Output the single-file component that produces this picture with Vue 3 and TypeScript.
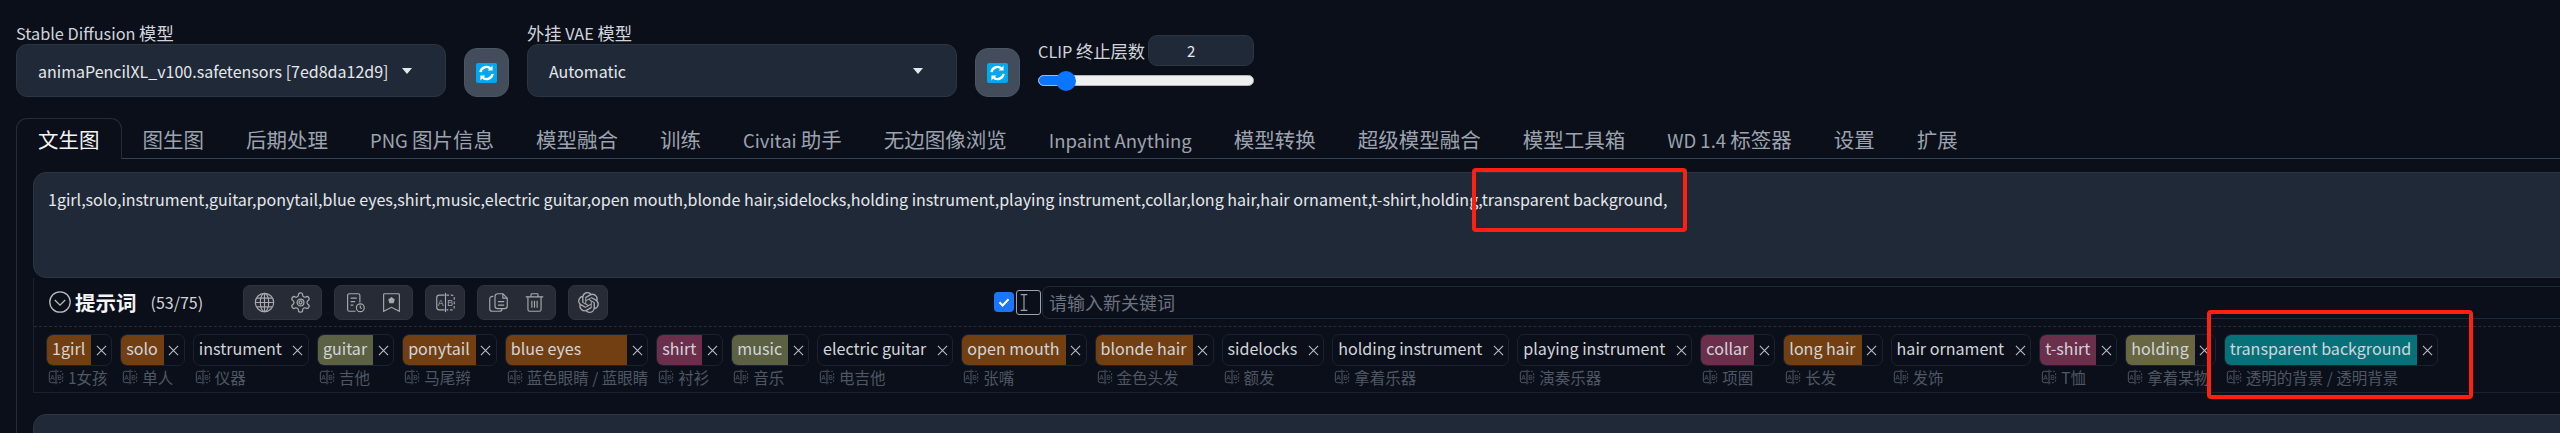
<script setup lang="ts">
interface Tag {
  name: string
  cn: string
  kind?: 'orange' | 'olive' | 'pink' | 'khaki' | 'teal'
}

const tabs = ['文生图', '图生图', '后期处理', 'PNG 图片信息', '模型融合', '训练', 'Civitai 助手', '无边图像浏览', 'Inpaint Anything', '模型转换', '超级模型融合', '模型工具箱', 'WD 1.4 标签器', '设置', '扩展']

const prompt = '1girl,solo,instrument,guitar,ponytail,blue eyes,shirt,music,electric guitar,open mouth,blonde hair,sidelocks,holding instrument,playing instrument,collar,long hair,hair ornament,t-shirt,holding,transparent background,'

const tags: Tag[] = [
  { name: '1girl', cn: '1女孩', kind: 'orange' },
  { name: 'solo', cn: '单人', kind: 'orange' },
  { name: 'instrument', cn: '仪器' },
  { name: 'guitar', cn: '吉他', kind: 'olive' },
  { name: 'ponytail', cn: '马尾辫', kind: 'orange' },
  { name: 'blue eyes', cn: '蓝色眼睛 / 蓝眼睛', kind: 'orange' },
  { name: 'shirt', cn: '衬衫', kind: 'pink' },
  { name: 'music', cn: '音乐', kind: 'olive' },
  { name: 'electric guitar', cn: '电吉他' },
  { name: 'open mouth', cn: '张嘴', kind: 'orange' },
  { name: 'blonde hair', cn: '金色头发', kind: 'orange' },
  { name: 'sidelocks', cn: '额发' },
  { name: 'holding instrument', cn: '拿着乐器' },
  { name: 'playing instrument', cn: '演奏乐器' },
  { name: 'collar', cn: '项圈', kind: 'pink' },
  { name: 'long hair', cn: '长发', kind: 'orange' },
  { name: 'hair ornament', cn: '发饰' },
  { name: 't-shirt', cn: 'T恤', kind: 'pink' },
  { name: 'holding', cn: '拿着某物', kind: 'khaki' },
  { name: 'transparent background', cn: '透明的背景 / 透明背景', kind: 'teal' }
]

// Latin and CJK runs are sized apart, the original's Latin face is narrower
function runs(text: string): { text: string; cjk: boolean }[] {
  return text
    .split(/([\u4e00-\u9fff]+)/)
    .filter((s) => s.length > 0)
    .map((s) => ({ text: s, cjk: /[\u4e00-\u9fff]/.test(s) }))
}
</script>

<template>
  <div class="page">
    <div class="top-row">
      <div class="field model-field">
        <label class="field-label"><span v-for="r in runs('Stable Diffusion 模型')" :key="r.text" :class="{ cjk: r.cjk }">{{ r.text }}</span></label>
        <div class="select">
          <span>animaPencilXL_v100.safetensors [7ed8da12d9]</span>
          <i class="caret"></i>
        </div>
      </div>
      <button class="refresh">
        <svg viewBox="0 0 21 20" width="21" height="20">
          <rect width="21" height="20" rx="2" fill="#00a8ef" />
          <path d="M4.5 9.2a6 6 0 0 1 10.3-3.4M16.5 10.8a6 6 0 0 1-10.3 3.4" fill="none" stroke="#fff" stroke-width="2.4" />
          <path d="M16.6 2.6v5h-5zM4.4 17.4v-5h5z" fill="#fff" />
        </svg>
      </button>
      <div class="field vae-field">
        <label class="field-label"><span v-for="r in runs('外挂 VAE 模型')" :key="r.text + r.cjk" :class="{ cjk: r.cjk }">{{ r.text }}</span></label>
        <div class="select">
          <span>Automatic</span>
          <i class="caret"></i>
        </div>
      </div>
      <button class="refresh">
        <svg viewBox="0 0 21 20" width="21" height="20">
          <rect width="21" height="20" rx="2" fill="#00a8ef" />
          <path d="M4.5 9.2a6 6 0 0 1 10.3-3.4M16.5 10.8a6 6 0 0 1-10.3 3.4" fill="none" stroke="#fff" stroke-width="2.4" />
          <path d="M16.6 2.6v5h-5zM4.4 17.4v-5h5z" fill="#fff" />
        </svg>
      </button>
      <div class="clip">
        <div class="clip-head">
          <span class="clip-label"><span v-for="r in runs('CLIP 终止层数')" :key="r.text" :class="{ cjk: r.cjk }">{{ r.text }}</span></span>
          <div class="clip-num">2</div>
        </div>
        <div class="slider">
          <div class="slider-fill"></div>
          <div class="slider-thumb"></div>
        </div>
      </div>
    </div>

    <div class="tabs">
      <div v-for="(t, i) in tabs" :key="t" :class="['tab', { active: i === 0 }]">
        <span v-for="r in runs(t)" :key="r.text" :class="{ latin: !r.cjk }">{{ r.text }}</span>
      </div>
      <div class="tabs-rest"></div>
    </div>

    <div class="panel">
      <div class="prompt-box">{{ prompt }}</div>

      <div class="editor">
        <div class="toolbar">
          <svg class="collapse" viewBox="0 0 22 22" width="22" height="22" fill="none" stroke="currentColor" stroke-width="1.3">
            <circle cx="11" cy="11" r="10.2" />
            <path d="M5.8 9l5.2 5.2L16.2 9" />
          </svg>
          <span class="editor-title">提示词</span>
          <span class="count">(53/75)</span>

          <div class="btn-group first">
            <svg viewBox="0 0 24 24" class="ico">
              <circle cx="12" cy="12" r="10.5" />
              <ellipse cx="12" cy="12" rx="4.8" ry="10.5" />
              <path d="M12 1.5v21M1.5 12h21M3 7h18M3 17h18" />
            </svg>
            <svg viewBox="1 1 22 22" class="ico">
              <path d="M12.22 2h-.44a2 2 0 0 0-2 2v.18a2 2 0 0 1-1 1.73l-.43.25a2 2 0 0 1-2 0l-.15-.08a2 2 0 0 0-2.73.73l-.22.38a2 2 0 0 0 .73 2.73l.15.1a2 2 0 0 1 1 1.72v.51a2 2 0 0 1-1 1.74l-.15.09a2 2 0 0 0-.73 2.73l.22.38a2 2 0 0 0 2.73.73l.15-.08a2 2 0 0 1 2 0l.43.25a2 2 0 0 1 1 1.73V20a2 2 0 0 0 2 2h.44a2 2 0 0 0 2-2v-.18a2 2 0 0 1 1-1.73l.43-.25a2 2 0 0 1 2 0l.15.08a2 2 0 0 0 2.73-.73l.22-.39a2 2 0 0 0-.73-2.73l-.15-.08a2 2 0 0 1-1-1.74v-.5a2 2 0 0 1 1-1.74l.15-.09a2 2 0 0 0 .73-2.73l-.22-.38a2 2 0 0 0-2.73-.73l-.15.08a2 2 0 0 1-2 0l-.43-.25a2 2 0 0 1-1-1.73V4a2 2 0 0 0-2-2z" />
              <circle cx="12" cy="12" r="3.6" />
              <circle cx="12" cy="12" r="1.6" />
            </svg>
          </div>
          <div class="btn-group">
            <svg viewBox="0 0 24 24" class="ico">
              <path d="M12 22H5a2 2 0 0 1-2-2V4a2 2 0 0 1 2-2h10a2 2 0 0 1 2 2v8" />
              <path d="M6.5 7h7M6.5 11h5M6.5 15h3" />
              <circle cx="17.5" cy="18" r="4.5" />
              <path d="M17.5 15.5V18l1.8 1" />
            </svg>
            <svg viewBox="0 0 24 24" class="ico">
              <path d="M4 2h16a1 1 0 0 1 1 1v19l-9-4.5L3 22V3a1 1 0 0 1 1-1z" />
              <path class="solid" d="M12 6.5l3 2.2-1.1 3.5h-3.8L9 8.7z" />
            </svg>
          </div>
          <div class="btn-group single">
            <svg viewBox="0 0 24 24" class="ico plain">
              <path d="M11 3.5H5a3 3 0 0 0-3 3v11a3 3 0 0 0 3 3h6" fill="none" stroke="currentColor" stroke-width="1.3" />
              <path d="M13 3.5h6a3 3 0 0 1 3 3v11a3 3 0 0 1-3 3h-6" fill="none" stroke="currentColor" stroke-width="1.3" stroke-dasharray="3 2" />
              <path d="M12 1v22" stroke="currentColor" stroke-width="1.3" />
              <text x="6.6" y="16" font-size="10" text-anchor="middle" fill="currentColor">A</text>
              <text x="17.2" y="16" font-size="10" text-anchor="middle" fill="currentColor">B</text>
            </svg>
          </div>
          <div class="btn-group">
            <svg viewBox="0 0 24 24" class="ico">
              <path d="M6 5H5a3 3 0 0 0-3 3v11a3 3 0 0 0 3 3h8a3 3 0 0 0 3-3" />
              <path d="M8 5a3 3 0 0 1 3-3h6l5 5v9a3 3 0 0 1-3 3h-8a3 3 0 0 1-3-3z" />
              <path d="M17 2v5h5M11.5 11h7M11.5 15h7" />
            </svg>
            <svg viewBox="0 0 24 24" class="ico">
              <path d="M2 5.5h20M8 5.5V3a1 1 0 0 1 1-1h6a1 1 0 0 1 1 1v2.5" />
              <path d="M4.5 5.5V20a2 2 0 0 0 2 2h11a2 2 0 0 0 2-2V5.5" />
              <path d="M9 10v8M12 10v8M15 10v8" />
            </svg>
          </div>
          <div class="btn-group single">
            <svg viewBox="0 0 24 24" class="ico filled">
              <path d="M22.2819 9.8211a5.9847 5.9847 0 0 0-.5157-4.9108 6.0462 6.0462 0 0 0-6.5098-2.9A6.0651 6.0651 0 0 0 4.9807 4.1818a5.9847 5.9847 0 0 0-3.9977 2.9 6.0462 6.0462 0 0 0 .7427 7.0966 5.98 5.98 0 0 0 .511 4.9107 6.051 6.051 0 0 0 6.5146 2.9001A5.9847 5.9847 0 0 0 13.2599 24a6.0557 6.0557 0 0 0 5.7718-4.2058 5.9894 5.9894 0 0 0 3.9977-2.9001 6.0557 6.0557 0 0 0-.7475-7.0729zm-9.022 12.6081a4.4755 4.4755 0 0 1-2.8764-1.0408l.1419-.0804 4.7783-2.7582a.7948.7948 0 0 0 .3927-.6813v-6.7369l2.02 1.1686a.071.071 0 0 1 .038.052v5.5826a4.504 4.504 0 0 1-4.4945 4.4944zm-9.6607-4.1254a4.4708 4.4708 0 0 1-.5346-3.0137l.142.0852 4.783 2.7582a.7712.7712 0 0 0 .7806 0l5.8428-3.3685v2.3324a.0804.0804 0 0 1-.0332.0615L9.74 19.9502a4.4992 4.4992 0 0 1-6.1408-1.6464zM2.3408 7.8956a4.485 4.485 0 0 1 2.3655-1.9728V11.6a.7664.7664 0 0 0 .3879.6765l5.8144 3.3543-2.0201 1.1685a.0757.0757 0 0 1-.071 0l-4.8303-2.7865A4.504 4.504 0 0 1 2.3408 7.872zm16.5963 3.8558L13.1038 8.364 15.1192 7.2a.0757.0757 0 0 1 .071 0l4.8303 2.7913a4.4944 4.4944 0 0 1-.6765 8.1042v-5.6772a.79.79 0 0 0-.407-.667zm2.0107-3.0231l-.142-.0852-4.7735-2.7818a.7759.7759 0 0 0-.7854 0L9.409 9.2297V6.8974a.0662.0662 0 0 1 .0284-.0615l4.8303-2.7866a4.4992 4.4992 0 0 1 6.6802 4.66zM8.3065 12.863l-2.02-1.1638a.0804.0804 0 0 1-.038-.0567V6.0742a4.4992 4.4992 0 0 1 7.3757-3.4537l-.142.0805L8.704 5.459a.7948.7948 0 0 0-.3927.6813zm1.0976-2.3654l2.602-1.4998 2.6069 1.4998v2.9994l-2.5974 1.4997-2.6067-1.4997Z" />
            </svg>
          </div>

          <label class="check"><svg viewBox="0 0 20 20" width="14" height="14" fill="none" stroke="#fff" stroke-width="3"><path d="M3.5 10.5l4.5 4.5 8.5-9" /></svg></label>
          <div class="cursor-box">
            <svg viewBox="0 0 12 22" width="10" height="19" fill="none" stroke="#9ca3af" stroke-width="1.4"><path d="M2 1.5h8M2 20.5h8M6 1.5v19" /></svg>
          </div>
          <div class="new-key">请输入新关键词</div>
        </div>

        <div class="tag-list">
          <div v-for="tag in tags" :key="tag.name" class="tag">
            <div class="tag-main">
              <span :class="['tag-name', tag.kind]">{{ tag.name }}</span>
              <span class="tag-close">
                <svg viewBox="0 0 12 12" width="11" height="11" fill="none" stroke="currentColor" stroke-width="1.2"><path d="M1 1l10 10M11 1L1 11" /></svg>
              </span>
            </div>
            <div class="tag-cn">
              <svg viewBox="0 0 24 24" class="tag-ab">
                <path d="M11 3.5H5a3 3 0 0 0-3 3v11a3 3 0 0 0 3 3h6" fill="none" stroke="currentColor" stroke-width="1.5" />
                <path d="M13 3.5h6a3 3 0 0 1 3 3v11a3 3 0 0 1-3 3h-6" fill="none" stroke="currentColor" stroke-width="1.5" stroke-dasharray="3 2" />
                <path d="M12 1v22" stroke="currentColor" stroke-width="1.5" />
                <text x="6.6" y="16" font-size="10" text-anchor="middle" fill="currentColor">A</text>
                <text x="17.2" y="16" font-size="10" text-anchor="middle" fill="currentColor">B</text>
              </svg>
              <span>{{ tag.cn }}</span>
            </div>
          </div>
        </div>
      </div>

      <div class="negative-box">Negative prompt (press Ctrl+Enter or Alt+Enter to generate)</div>
    </div>

    <div class="mark mark-prompt"></div>
    <div class="mark mark-tag"></div>
  </div>
</template>

<style>
html, body {
  margin: 0;
  background: #0b0f19;
  overflow: hidden;
}
</style>

<style scoped>
* {
  box-sizing: border-box;
}

.page {
  position: relative;
  width: 2560px;
  height: 433px;
  overflow: hidden;
  background: #0b0f19;
  color: #e5e7eb;
  font-family: "Noto Sans CJK SC", "Noto Sans", sans-serif;
  font-size: 16px;
}

.top-row {
  display: flex;
  align-items: flex-start;
  padding: 22px 0 0 16px;
  height: 118px;
}

.field-label {
  display: block;
  height: 22px;
  line-height: 22px;
  font-size: 16.3px;
  color: #d1d5db;
}

.cjk {
  font-size: 17.3px;
}

.model-field,
.vae-field {
  width: 430px;
}

.select {
  display: flex;
  align-items: center;
  height: 53px;
  padding: 0 33px 0 21px;
  background: #1f2937;
  border: 1px solid #2b3544;
  border-radius: 11px;
  color: #e5e7eb;
  font-size: 16px;
  position: relative;
}

.caret {
  margin-left: auto;
  width: 0;
  height: 0;
  border-left: 5px solid transparent;
  border-right: 5px solid transparent;
  border-top: 6px solid #e5e7eb;
}

.refresh {
  display: flex;
  align-items: center;
  justify-content: center;
  width: 45px;
  height: 49px;
  margin: 26px 18px 0;
  padding: 0;
  border: 1px solid #4b5563;
  border-radius: 13px;
  background: #434c5b;
}

.clip {
  margin: 13px 0 0;
  width: 216px;
}

.clip-head {
  display: flex;
  align-items: center;
  height: 31px;
}

.clip-label {
  width: 110px;
  font-size: 16.3px;
  color: #d1d5db;
  white-space: nowrap;
}

.clip-num {
  width: 106px;
  height: 31px;
  line-height: 29px;
  padding-left: 38px;
  background: #1f2937;
  border: 1px solid #2b3544;
  border-radius: 9px;
  font-size: 15px;
  color: #e5e7eb;
}

.slider {
  position: relative;
  height: 11px;
  margin-top: 9px;
  background: #efefef;
  border: 1px solid #b5b5b5;
  border-radius: 6px;
}

.slider-fill {
  width: 28px;
  height: 100%;
  background: #0a75ff;
  border-radius: 6px 0 0 6px;
}

.slider-thumb {
  position: absolute;
  left: 17px;
  top: -5px;
  width: 20px;
  height: 20px;
  background: #0a75ff;
  border-radius: 50%;
}

.tabs {
  display: flex;
  height: 41px;
  padding-left: 16px;
}

.tab {
  padding: 6px 21px 0;
  font-size: 20.5px;
  line-height: 30px;
  color: #9ca3af;
  border-bottom: 1px solid #374151;
  white-space: nowrap;
}

.tab .latin {
  font-size: 18.5px;
}

.tab.active {
  color: #f3f4f6;
  background: #0b0f19;
  border: 1px solid #252c39;
  border-bottom: 0;
  border-radius: 11px 11px 0 0;
  padding-top: 5px;
}

.tabs-rest {
  flex: 1;
  border-bottom: 1px solid #374151;
}

.panel {
  margin-left: 16px;
  height: 300px;
  width: 2700px;
  padding: 13px 0 0 16px;
  border-left: 1px solid #252c39;
}

.prompt-box {
  height: 106px;
  padding: 14px 15px 0 14px;
  background: #1f2937;
  border: 1px solid #2b3544;
  border-radius: 13px;
  line-height: 24px;
  font-size: 16.06px;
  color: #e5e7eb;
  white-space: nowrap;
}

.editor {
  height: 115px;
  border: 1px solid #1a2130;
  border-top: 0;
  border-right: 0;
}

.toolbar {
  display: flex;
  align-items: center;
  height: 49px;
  padding-left: 15px;
  border-bottom: 1px dashed #252c39;
}

.collapse {
  color: #b9bcc2;
  flex-shrink: 0;
}

.editor-title {
  margin-left: 4px;
  font-size: 20.5px;
  font-weight: 700;
  color: #f3f4f6;
}

.count {
  margin-left: 14px;
  font-size: 16px;
  color: #d1d5db;
}

.btn-group {
  display: flex;
  align-items: center;
  justify-content: space-between;
  width: 79px;
  height: 35px;
  margin-left: 12px;
  padding: 0 10px;
  background: #272b35;
  border: 1px solid #2f3440;
  border-radius: 7px;
}

.btn-group.first {
  margin-left: 40px;
}

.btn-group.single {
  width: 40px;
  justify-content: center;
  padding: 0;
}

.ico {
  width: 21px;
  height: 21px;
  fill: none;
  stroke: #a6a9b0;
  stroke-width: 1.3;
  color: #a6a9b0;
  flex-shrink: 0;
}

.ico.plain {
  stroke: none;
}

.ico.filled {
  fill: #a6a9b0;
  stroke: none;
}

.ico .solid {
  fill: #a6a9b0;
}

.ico text,
.tag-ab text {
  font-family: "Liberation Sans", sans-serif;
  stroke: none;
}

.check {
  display: flex;
  align-items: center;
  justify-content: center;
  width: 20px;
  height: 20px;
  margin-left: 386px;
  background: #1a75ff;
  border-radius: 4px;
}

.cursor-box {
  display: flex;
  align-items: center;
  width: 25px;
  height: 25px;
  margin-left: 2px;
  padding-left: 2px;
  border: 1px solid #9ca3af;
  border-radius: 3px;
}

.new-key {
  flex: 1;
  height: 33px;
  line-height: 30px;
  margin-left: 1px;
  padding-left: 6px;
  border: 1px solid #1f2937;
  border-radius: 7px;
  font-size: 18px;
  color: #6b7280;
}

.tag-list {
  display: flex;
  gap: 8px;
  padding: 7px 0 0 12px;
}

.tag {
  display: flex;
  flex-direction: column;
  flex-shrink: 0;
}

.tag-main {
  display: flex;
  height: 32px;
  border: 1px solid #1a2130;
  border-radius: 7px;
  overflow: hidden;
}

.tag-name {
  flex: 1;
  padding: 0 6px;
  line-height: 29px;
  margin: -1px 0 -1px -1px;
  font-size: 16.09px;
  color: #d1d5db;
  white-space: nowrap;
}

.tag-name.orange { background: #713f12; }
.tag-name.olive { background: #5b6142; }
.tag-name.pink { background: #6b2f4b; }
.tag-name.khaki { background: #686643; }
.tag-name.teal { background: #07717a; }

.tag-close {
  display: flex;
  align-items: center;
  justify-content: center;
  width: 20px;
  color: #b9bcc2;
}

.tag-cn {
  display: flex;
  align-items: center;
  gap: 4px;
  height: 22px;
  padding-left: 2px;
  font-size: 15.5px;
  color: #4f5764;
  white-space: nowrap;
}

.tag-ab {
  width: 16px;
  height: 16px;
  flex-shrink: 0;
}

.negative-box {
  height: 60px;
  margin-top: 21px;
  padding: 12px 15px 0 24px;
  background: #1f2937;
  border: 1px solid #2b3544;
  border-radius: 13px;
  line-height: 24px;
  font-size: 16px;
  color: #7b8491;
}

.mark {
  position: absolute;
  border: 4px solid #ff2012;
  border-radius: 4px;
}

.mark-prompt {
  left: 1472px;
  top: 168px;
  width: 215px;
  height: 64px;
}

.mark-tag {
  left: 2207px;
  top: 310px;
  width: 266px;
  height: 89px;
}
</style>
